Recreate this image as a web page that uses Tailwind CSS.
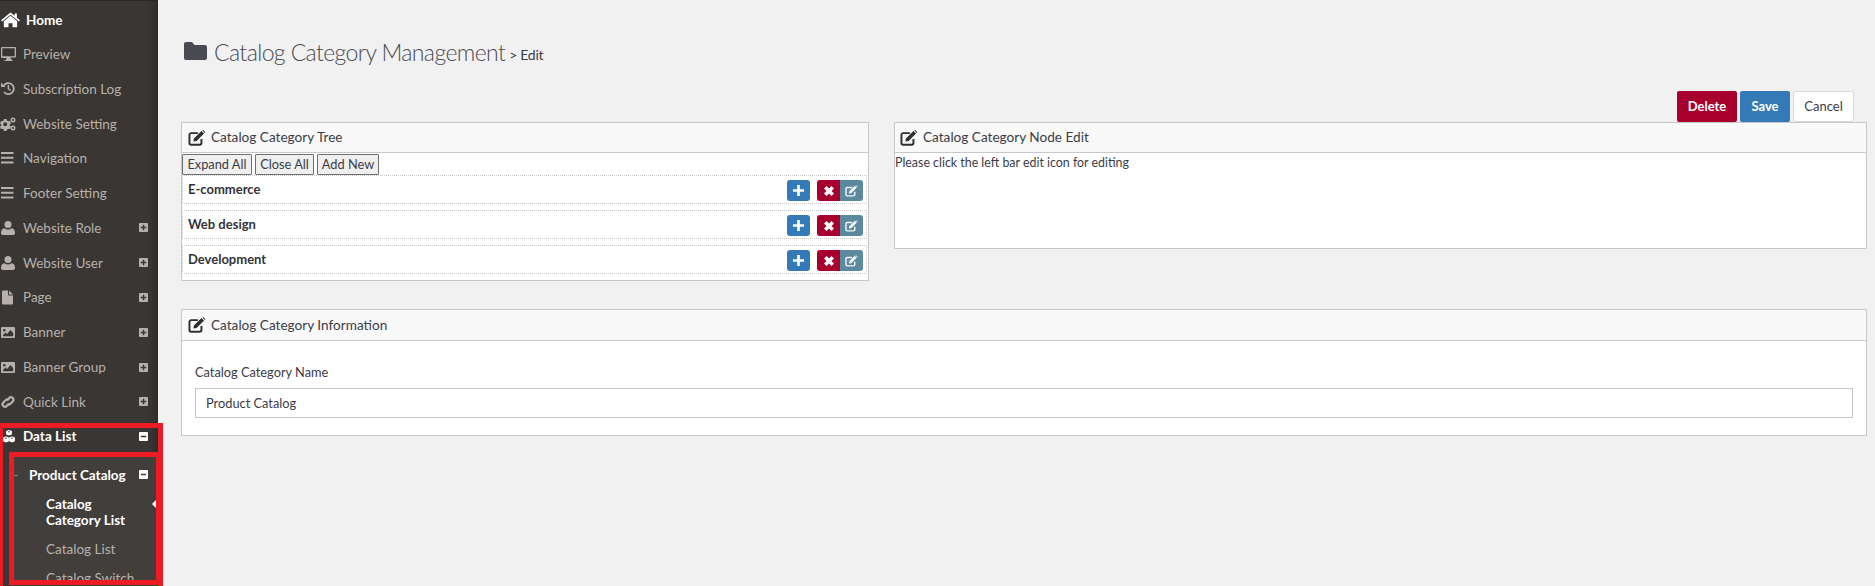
<!DOCTYPE html>
<html lang="en">
<head>
  <meta charset="UTF-8" />
  <meta name="viewport" content="width=device-width, initial-scale=1.0" />
  <title>Catalog Category Management</title>
  <script src="https://cdn.jsdelivr.net/npm/@tailwindcss/browser@4"></script>
</head>
<body class="bg-[#f1f1f1] font-['Lato','Noto_Sans',sans-serif] text-[#3c3c46] overflow-hidden">
  <svg class="hidden">
    <symbol id="i-edit" viewBox="0 0 20 18"><path fill="none" stroke="currentColor" stroke-width="2.200" d="M15 10v4.500a2 2 0 0 1-2 2H3.500a2 2 0 0 1-2-2V5.500a2 2 0 0 1 2-2H11"/><path fill="currentColor" d="M6.500 9.500 15 1l3 3-8.500 8.500-3.500.5zM16 .5l1-.5 2.500 2.500-.5 1z"/></symbol>
    <symbol id="i-plus-box" viewBox="0 0 10 10"><path fill="currentColor" fill-rule="evenodd" d="M1 0h8a1 1 0 0 1 1 1v8a1 1 0 0 1-1 1H1a1 1 0 0 1-1-1V1a1 1 0 0 1 1-1zm3.200 2v2.200H2v1.600h2.200V8h1.600V5.800H8V4.200H5.800V2z"/></symbol>
    <symbol id="i-minus-box" viewBox="0 0 10 10"><path fill="currentColor" fill-rule="evenodd" d="M1 0h8a1 1 0 0 1 1 1v8a1 1 0 0 1-1 1H1a1 1 0 0 1-1-1V1a1 1 0 0 1 1-1zm1 4.100v1.800h6V4.100z"/></symbol>
    <symbol id="i-user" viewBox="0 0 14 14"><circle cx="7" cy="3.600" r="3.500" fill="currentColor"/><path fill="currentColor" d="M0 12c0-3 1.500-4.800 3.500-4.800 1 .8 2.200 1.200 3.500 1.200s2.500-.4 3.500-1.200c2 0 3.500 1.800 3.500 4.800 0 1.300-.8 2-2 2H2c-1.200 0-2-.7-2-2z"/></symbol>
    <symbol id="i-bars" viewBox="0 0 14 12"><path fill="currentColor" d="M0 0h12.500v2H0zM0 4.800h12.500v2H0zM0 9.600h12.500v2H0z"/></symbol>
    <symbol id="i-image" viewBox="0 0 14 11"><path fill="currentColor" fill-rule="evenodd" d="M1 0h12a1 1 0 0 1 1 1v9a1 1 0 0 1-1 1H1a1 1 0 0 1-1-1V1a1 1 0 0 1 1-1zm2.300 2a1.300 1.300 0 1 0 0 2.600 1.300 1.300 0 0 0 0-2.600zM2 9.200h10.200V6L9.500 3 6 7 4.500 5.600 2 8z"/></symbol>
    <symbol id="i-plus" viewBox="0 0 10 10"><path fill="currentColor" d="M3.800 0h2.400v3.800H10v2.400H6.200V10H3.800V6.200H0V3.800h3.800z"/></symbol>
    <symbol id="i-times" viewBox="0 0 10 10"><path fill="currentColor" d="M2.500 0 5 2.500 7.500 0 10 2.500 7.500 5 10 7.500 7.500 10 5 7.500 2.500 10 0 7.500 2.500 5 0 2.500z"/></symbol>
  </svg>

  <div class="relative flex h-[586px] w-[1875px] overflow-hidden">
    <!-- sidebar -->
    <aside class="h-full w-[158px] shrink-0 border-t border-[#2a2725] bg-[#3a3633] pt-[1px] text-[13.500px] text-[#b6b1ac] shadow-[inset_-8px_0_8px_-6px_rgba(0,0,0,0.3)]">
      <a class="flex h-[34.770px] items-center pt-[2px] font-bold text-white">
        <svg class="ml-[1px] w-[19px] h-[16px]" viewBox="0 0 20 16" fill="currentColor"><path d="M10 3.500 3 9.300V15a.7.7 0 0 0 .7.7h4.200v-4.400h4.200v4.400h4.200A.7.7 0 0 0 17 15V9.300z"/><path d="M10 0 0 8.300l1.200 1.400L10 2.400l8.800 7.300L20 8.300l-3.300-2.800V1.200h-2.400v2.300z"/></svg>
        <span class="ml-[6px]">Home</span>
      </a>
      <a class="flex h-[34.770px] items-center">
        <svg class="ml-[1px] w-[15px] h-[14px]" viewBox="0 0 15 14" fill="currentColor"><path fill-rule="evenodd" d="M1 0h13a1 1 0 0 1 1 1v8.500a1 1 0 0 1-1 1H9.500l.5 2h1.500v1.500h-8V13H5l.5-2H1a1 1 0 0 1-1-1V1a1 1 0 0 1 1-1zm.3 1.300v7.900h12.400V1.300z"/></svg>
        <span class="ml-[7px]">Preview</span>
      </a>
      <a class="flex h-[34.770px] items-center">
        <svg class="ml-[1px] w-[14px] h-[13px]" viewBox="0 0 14 13"><path fill="none" stroke="currentColor" stroke-width="1.800" d="M2.800 3.500A5.500 5.500 0 1 1 3 10"/><path fill="currentColor" d="M0 .5 4.500 5H0zM6.600 3h1.500v3.400l2 1.400-.8 1.100-2.700-1.900z"/></svg>
        <span class="ml-[8px]">Subscription Log</span>
      </a>
      <a class="flex h-[34.770px] items-center">
        <svg class="w-[16px] h-[14px]" viewBox="0 0 16 14" fill="currentColor"><path fill-rule="evenodd" d="M4 2h2.500l.4 1.500 1.500.7L10 4l1 2.500-1.300 1-.1 1L11 9.500 10 12l-1.800-.3-1.300 1-.4 1.300H4l-.4-1.400-1.300-.8-1.500.3L0 9.500 1.200 8.500v-1L0 6.500 1 4l1.500.2 1.100-.8zm1.200 3.300a2 2 0 1 0 0 4 2 2 0 0 0 0-4z"/><path fill-rule="evenodd" d="M13 .5a2.500 2.500 0 1 1 0 5 2.500 2.500 0 0 1 0-5zm0 1.500a1 1 0 1 0 0 2 1 1 0 0 0 0-2zM13 8.500a2.500 2.500 0 1 1 0 5 2.500 2.500 0 0 1 0-5zm0 1.500a1 1 0 1 0 0 2 1 1 0 0 0 0-2z"/></svg>
        <span class="ml-[7px]">Website Setting</span>
      </a>
      <a class="flex h-[34.770px] items-center">
        <svg class="ml-[1px] w-[14px] h-[12px]"><use href="#i-bars"/></svg>
        <span class="ml-[8px]">Navigation</span>
      </a>
      <a class="flex h-[34.770px] items-center">
        <svg class="ml-[1px] w-[14px] h-[12px]"><use href="#i-bars"/></svg>
        <span class="ml-[8px]">Footer Setting</span>
      </a>
      <a class="flex h-[34.770px] items-center">
        <svg class="ml-[1px] w-[14px] h-[14px]"><use href="#i-user"/></svg>
        <span class="ml-[8px] flex-1">Website Role</span>
        <svg class="mr-[10px] w-[9px] h-[9px]"><use href="#i-plus-box"/></svg>
      </a>
      <a class="flex h-[34.770px] items-center">
        <svg class="ml-[1px] w-[14px] h-[14px]"><use href="#i-user"/></svg>
        <span class="ml-[8px] flex-1">Website User</span>
        <svg class="mr-[10px] w-[9px] h-[9px]"><use href="#i-plus-box"/></svg>
      </a>
      <a class="flex h-[34.770px] items-center">
        <svg class="ml-[2px] w-[11px] h-[15px]" viewBox="0 0 11 14" fill="currentColor"><path d="M0 1a1 1 0 0 1 1-1h5v4a1 1 0 0 0 1 1h4v8a1 1 0 0 1-1 1H1a1 1 0 0 1-1-1z"/><path d="M7 0l4 4H7z"/></svg>
        <span class="ml-[10px] flex-1">Page</span>
        <svg class="mr-[10px] w-[9px] h-[9px]"><use href="#i-plus-box"/></svg>
      </a>
      <a class="flex h-[34.770px] items-center">
        <svg class="ml-[1px] w-[14px] h-[11px]"><use href="#i-image"/></svg>
        <span class="ml-[8px] flex-1">Banner</span>
        <svg class="mr-[10px] w-[9px] h-[9px]"><use href="#i-plus-box"/></svg>
      </a>
      <a class="flex h-[34.770px] items-center">
        <svg class="ml-[1px] w-[14px] h-[11px]"><use href="#i-image"/></svg>
        <span class="ml-[8px] flex-1">Banner Group</span>
        <svg class="mr-[10px] w-[9px] h-[9px]"><use href="#i-plus-box"/></svg>
      </a>
      <a class="flex h-[34.770px] items-center">
        <svg class="ml-[1px] w-[14px] h-[14px]" viewBox="0 0 14 14" fill="none" stroke="currentColor" stroke-width="2.200"><path d="M6 5.200 8.200 3a2.500 2.500 0 0 1 3.500 0 2.500 2.500 0 0 1 0 3.500L9.400 8.800a2.500 2.500 0 0 1-3.300.2"/><path d="M8 8.800 5.800 11a2.500 2.500 0 0 1-3.500 0 2.500 2.500 0 0 1 0-3.500l2.300-2.300a2.500 2.500 0 0 1 3.300-.2"/></svg>
        <span class="ml-[8px] flex-1">Quick Link</span>
        <svg class="mr-[10px] w-[9px] h-[9px]"><use href="#i-plus-box"/></svg>
      </a>
      <a class="flex h-[34.770px] items-center font-bold text-white">
        <svg class="ml-[3px] w-[12px] h-[13px]" viewBox="0 0 12 13" fill="currentColor"><path fill-rule="evenodd" d="M6 0l2.900 1.100v3.300L6 5.600 3.100 4.400V1.100zM6 1.200 4.500 1.800 6 2.400l1.500-.6z"/><path fill-rule="evenodd" d="M3 6.300l2.900 1.100v3.900L3 12.600.1 11.300V7.400zM3 7.500l-1.500.6L3 8.700l1.500-.6z"/><path fill-rule="evenodd" d="M9 6.300l2.900 1.100v3.900L9 12.600l-2.900-1.300V7.400zM9 7.500l-1.500.6L9 8.700l1.500-.6z"/></svg>
        <span class="ml-[8px] flex-1">Data List</span>
        <svg class="mr-[10px] w-[9px] h-[9px]"><use href="#i-minus-box"/></svg>
      </a>
      <div class="ml-[10px] h-[200px] bg-[#413e3c]">
        <div class="relative flex h-[41px] items-center pt-[1px] font-bold text-white">
          <span class="absolute left-[4px] top-[21px] h-px w-[4px] bg-[#8a8683]"></span>
          <span class="ml-[19px] flex-1">Product Catalog</span>
          <svg class="mr-[10px] w-[9px] h-[9px]"><use href="#i-minus-box"/></svg>
        </div>
        <a class="relative block pl-[36px] pt-[1px] font-bold leading-[16px] text-white">
          Catalog<br />Category List
          <span class="absolute right-[2px] top-[5px] h-0 w-0 border-y-[4px] border-r-[4px] border-y-transparent border-r-white"></span>
        </a>
        <a class="block pl-[36px] pt-[13px] leading-[16px]">Catalog List</a>
        <a class="block pl-[36px] pt-[13px] leading-[16px]">Catalog Switch</a>
      </div>
    </aside>

    <!-- main -->
    <main class="flex-1 pl-[23px] pr-[8px]">
      <div class="flex h-[91px] items-start pl-[3px] pt-[36px]">
        <svg class="mt-[6px] w-[23px] h-[18px] text-[#4a4b52]" viewBox="0 0 23 18" fill="currentColor"><path d="M2 0h6l2.500 3H21a2 2 0 0 1 2 2v11a2 2 0 0 1-2 2H2a2 2 0 0 1-2-2V2a2 2 0 0 1 2-2z"/></svg>
        <h1 class="ml-[7px] text-[23px] font-light leading-[32px] tracking-[-0.6px] text-[#4a4b52]">Catalog Category Management</h1>
        <span class="ml-[4px] mt-[9px] text-[14px] leading-[20px] tracking-[-0.3px]">&gt; Edit</span>
      </div>

      <div class="flex items-start">
        <div class="w-[688px]">
          <div class="h-[31px]"></div>
          <section class="border border-[#c8c8c8] bg-white">
            <h2 class="flex h-[30px] items-center border-b border-[#c8c8c8] bg-[#f9f9f9] pl-[6px] text-[13.600px]">
              <svg class="w-[18px] h-[16px] text-[#2e2e33]"><use href="#i-edit"/></svg>
              <span class="ml-[5px]">Catalog Category Tree</span>
            </h2>
            <div class="flex h-[22px] gap-[3px] pt-[1px] text-[12.800px]">
              <button class="h-[21px] w-[70px] rounded-[1px] border border-[#6f6f6f] bg-[#efefef]">Expand All</button>
              <button class="h-[21px] w-[59px] rounded-[1px] border border-[#6f6f6f] bg-[#efefef]">Close All</button>
              <button class="h-[21px] w-[62px] rounded-[1px] border border-[#6f6f6f] bg-[#efefef]">Add New</button>
            </div>
            <div class="mr-[1px] flex h-[29px] items-center border border-dotted border-[#c8c8c8] pl-[5px] pr-[3px] text-[13px] font-bold text-[#33333a]">
              <span class="flex-1">E-commerce</span>
              <button class="mt-[2px] flex h-[21px] w-[23px] items-center justify-center rounded-[3px] bg-[#337ab7] text-white"><svg class="w-[11px] h-[11px]"><use href="#i-plus"/></svg></button>
              <button class="ml-[7px] mt-[2px] flex h-[21px] w-[23px] items-center justify-center rounded-l-[3px] bg-[#a8002d] text-white"><svg class="w-[10px] h-[10px]"><use href="#i-times"/></svg></button>
              <button class="mt-[2px] flex h-[21px] w-[23px] items-center justify-center rounded-r-[3px] bg-[#5b8a9f] text-[#f2f6f8]"><svg class="w-[13px] h-[12px]"><use href="#i-edit"/></svg></button>
            </div>
            <div class="mr-[1px] mt-[6px] flex h-[29px] items-center border border-dotted border-[#c8c8c8] pl-[5px] pr-[3px] text-[13px] font-bold text-[#33333a]">
              <span class="flex-1">Web design</span>
              <button class="mt-[2px] flex h-[21px] w-[23px] items-center justify-center rounded-[3px] bg-[#337ab7] text-white"><svg class="w-[11px] h-[11px]"><use href="#i-plus"/></svg></button>
              <button class="ml-[7px] mt-[2px] flex h-[21px] w-[23px] items-center justify-center rounded-l-[3px] bg-[#a8002d] text-white"><svg class="w-[10px] h-[10px]"><use href="#i-times"/></svg></button>
              <button class="mt-[2px] flex h-[21px] w-[23px] items-center justify-center rounded-r-[3px] bg-[#5b8a9f] text-[#f2f6f8]"><svg class="w-[13px] h-[12px]"><use href="#i-edit"/></svg></button>
            </div>
            <div class="mr-[1px] mb-[6px] mt-[6px] flex h-[29px] items-center border border-dotted border-[#c8c8c8] pl-[5px] pr-[3px] text-[13px] font-bold text-[#33333a]">
              <span class="flex-1">Development</span>
              <button class="mt-[2px] flex h-[21px] w-[23px] items-center justify-center rounded-[3px] bg-[#337ab7] text-white"><svg class="w-[11px] h-[11px]"><use href="#i-plus"/></svg></button>
              <button class="ml-[7px] mt-[2px] flex h-[21px] w-[23px] items-center justify-center rounded-l-[3px] bg-[#a8002d] text-white"><svg class="w-[10px] h-[10px]"><use href="#i-times"/></svg></button>
              <button class="mt-[2px] flex h-[21px] w-[23px] items-center justify-center rounded-r-[3px] bg-[#5b8a9f] text-[#f2f6f8]"><svg class="w-[13px] h-[12px]"><use href="#i-edit"/></svg></button>
            </div>
          </section>
        </div>

        <div class="ml-[25px] flex-1">
          <div class="flex h-[31px] justify-end gap-[3px] pr-[13px] text-[13px]">
            <button class="w-[60px] rounded-[2px] bg-[#a8002d] font-bold text-white">Delete</button>
            <button class="w-[50px] rounded-[2px] bg-[#337ab7] font-bold text-white">Save</button>
            <button class="w-[61px] rounded-[2px] border border-[#d8d8d8] bg-white">Cancel</button>
          </div>
          <section class="h-[127px] border border-[#c8c8c8] bg-white">
            <h2 class="flex h-[30px] items-center border-b border-[#c8c8c8] bg-[#f9f9f9] pl-[5px] text-[13.600px]">
              <svg class="w-[18px] h-[16px] text-[#2e2e33]"><use href="#i-edit"/></svg>
              <span class="ml-[5px]">Catalog Category Node Edit</span>
            </h2>
            <p class="pt-[1px] text-[12.400px] leading-[18px]">Please click the left bar edit icon for editing</p>
          </section>
        </div>
      </div>

      <section class="mt-[28px] h-[127px] border border-[#c8c8c8] bg-white">
        <h2 class="flex h-[31px] items-center border-b border-[#c8c8c8] bg-[#f9f9f9] pl-[6px] text-[13.600px]">
          <svg class="w-[18px] h-[16px] text-[#2e2e33]"><use href="#i-edit"/></svg>
          <span class="ml-[5px]">Catalog Category Information</span>
        </h2>
        <div class="px-[13px] pt-[22px]">
          <label class="block text-[12.800px] leading-[18px]">Catalog Category Name</label>
          <input class="mt-[7px] h-[30px] w-full border border-[#c4c4c4] px-[10px] text-[12.800px] text-[#3c3c46]" value="Product Catalog" />
        </div>
      </section>
    </main>

    <!-- red annotation boxes drawn over the screenshot -->
    <div class="absolute left-0 top-[423px] h-[180px] w-[163px] border-x-[3px] border-t-[5px] border-[#ed1c24] border-r-[5px]"></div>
    <div class="absolute left-[9px] top-[452px] h-[133px] w-[154px] border-[5px] border-[#ed1c24] border-r-[7px]"></div>
  </div>
</body>
</html>
